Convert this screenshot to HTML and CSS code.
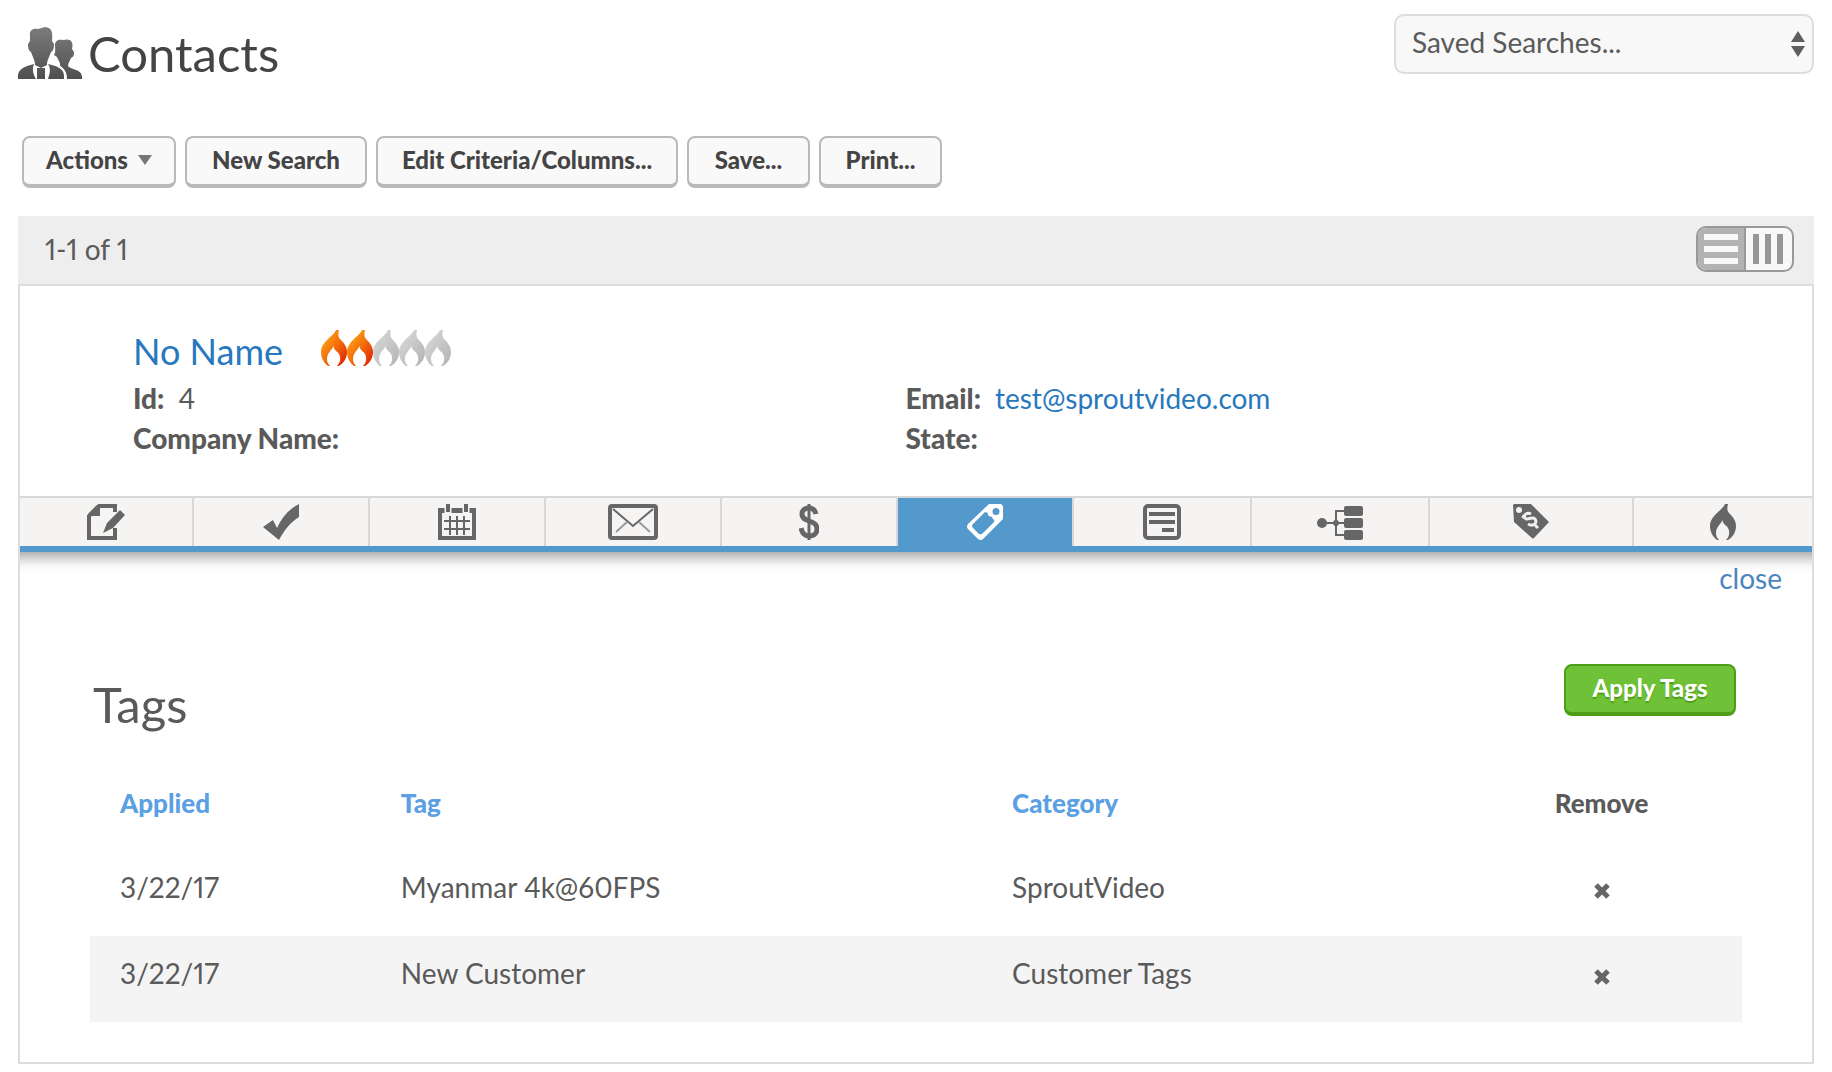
FILE: index.html
```html
<!DOCTYPE html>
<html lang="en">
<head>
<meta charset="utf-8">
<title>Contacts</title>
<link rel="stylesheet" href="styles.css">
</head>
<body>
<svg class="defs" aria-hidden="true">
  <defs>
    <linearGradient id="hot" x1="0" y1="0" x2="1" y2="1">
      <stop offset="0.2" stop-color="#fb9a14"/>
      <stop offset="0.5" stop-color="#f4700b"/>
      <stop offset="0.85" stop-color="#e33205"/>
    </linearGradient>
    <linearGradient id="cold" x1="0" y1="0" x2="1" y2="1">
      <stop offset="0.2" stop-color="#d3d3d3"/>
      <stop offset="0.85" stop-color="#b9b9b9"/>
    </linearGradient>
    <linearGradient id="people" gradientUnits="userSpaceOnUse" x1="0" y1="0" x2="0" y2="52">
      <stop offset="0" stop-color="#7c7c7c"/>
      <stop offset="1" stop-color="#4f4f4f"/>
    </linearGradient>
    <symbol id="flame" viewBox="0 0 26 36">
      <path d="M15 0H18C17 4 17 7 19 9C22 12 26 16 26 22C26 28 23 33 18 36H16C19 33 20 29 18.500 25C17 21 13 21 12.500 16C11 20 6 23 6 29C6 32 7 34 9 36H7C3 33 0 28 0 22C0 16 4 12 8 8C11 5 14 3 15 0Z"/>
    </symbol>
  </defs>
</svg>

<header class="page-head">
  <h1 class="title">
    <svg class="title-icon" viewBox="0 0 64 52" fill="url(#people)" aria-hidden="true">
      <path d="M12 9C11 3 15 1 20 2L27 0C34 1 35 5 34 14L36 17C36 22 35 24 33 25C31 31 29 33 29 38L23 41L17 38C17 33 15 31 13 25C11 24 10 22 10 17L12 14Z"/>
      <path d="M37 18C37 14 40 12 45 13C52 11 56 14 54 22L56 25C56 29 55 30 53 31C52 34 50 36 50 39C53 43 64 42 64 50V52H49C49 45 46 41 42 39C43 36 40 33 39 30L36 28C38 25 37 22 37 18Z"/>
      <path d="M0 52V49C0 41 9 39 16 37C14 42 15 47 18 52Z"/>
      <path d="M30 37C38 39 46 41 46 49V52H30C32 46 33 42 30 37Z"/>
      <path d="M19 41H27V52H19Z"/>
    </svg>
    Contacts
  </h1>
  <div class="saved">
    <select class="saved-select" aria-label="Saved searches">
      <option>Saved Searches...</option>
    </select>
    <svg class="saved-arrows" viewBox="0 0 14 26" aria-hidden="true"><path d="M7 0L14 11H0ZM7 26L14 15H0Z" fill="#5e5e5e"/></svg>
  </div>
</header>

<div class="actions">
  <button class="btn btn-menu" type="button">Actions<svg class="caret" viewBox="0 0 14 10" aria-hidden="true"><path d="M0 0H14L7 10Z" fill="#777"/></svg></button>
  <button class="btn btn-search" type="button">New Search</button>
  <button class="btn btn-edit" type="button">Edit Criteria/Columns...</button>
  <button class="btn btn-short" type="button">Save...</button>
  <button class="btn btn-short" type="button">Print...</button>
</div>

<main class="results">
  <div class="bar">
    <span>1-1 of 1</span>
    <div class="toggle">
      <button class="toggle-btn is-on" type="button" aria-label="List view"><svg viewBox="0 0 34 32" aria-hidden="true"><path d="M0 1H34V7H0ZM0 13H34V19H0ZM0 25H34V31H0Z" fill="#f8f8f8"/></svg></button>
      <button class="toggle-btn" type="button" aria-label="Column view"><svg viewBox="0 0 34 32" aria-hidden="true"><path d="M1 1H7V31H1ZM13 1H19V31H13ZM25 1H31V31H25Z" fill="#969696"/></svg></button>
    </div>
  </div>

  <div class="card">
    <section class="contact">
      <div class="name-row">
        <a class="name" href="#">No Name</a>
        <div class="rating" role="img" aria-label="Score 2 of 5">
          <svg fill="url(#hot)"><use href="#flame"/></svg>
          <svg fill="url(#hot)"><use href="#flame"/></svg>
          <svg fill="url(#cold)"><use href="#flame"/></svg>
          <svg fill="url(#cold)"><use href="#flame"/></svg>
          <svg fill="url(#cold)"><use href="#flame"/></svg>
        </div>
      </div>
      <dl class="fields">
        <div class="field"><dt>Id:</dt><dd>4</dd></div>
        <div class="field"><dt>Email:</dt><dd><a href="#">test@sproutvideo.com</a></dd></div>
        <div class="field"><dt>Company Name:</dt><dd></dd></div>
        <div class="field"><dt>State:</dt><dd></dd></div>
      </dl>
    </section>

    <nav class="tabs">
      <a class="tab" href="#" aria-label="Notes"><svg width="38" height="36" viewBox="0 0 38 36"><path d="M28 8V2H12L2 12V34H28V24" fill="none" stroke="#666" stroke-width="4"/><path d="M10 1H13V12H1V10Z" fill="#666"/><path d="M33 6L38 11L26 24L16 29L20 19Z" fill="#666"/></svg></a>
      <a class="tab" href="#" aria-label="Tasks"><svg width="36" height="36" viewBox="0 0 36 36"><path d="M0 23L10 16L14 24C19 13 26 5 36 0V13C28 18 22 25 16 36Z" fill="#666"/></svg></a>
      <a class="tab" href="#" aria-label="Appointments"><svg width="38" height="36" viewBox="0 0 38 36"><path d="M2 6H36V34H2Z" fill="none" stroke="#666" stroke-width="4"/><path d="M2 4H36V9H2Z" fill="#666"/><path d="M10 3V9M28 3V9" stroke="#f5f4f2" stroke-width="7"/><path d="M10 0V8M28 0V8" stroke="#666" stroke-width="4"/><path d="M12 12V31M19 12V31M26 12V31M6 17H32M6 25H32" stroke="#666" stroke-width="2"/></svg></a>
      <a class="tab" href="#" aria-label="Email"><svg width="50" height="36" viewBox="0 0 50 36"><rect x="2" y="2" width="46" height="32" rx="2" fill="none" stroke="#666" stroke-width="4"/><path d="M5 5L25 22L45 5" fill="none" stroke="#666" stroke-width="2"/><path d="M8 28L19 18M42 28L31 18" stroke="#999" stroke-width="2"/></svg></a>
      <a class="tab" href="#" aria-label="Orders"><svg width="20" height="36" viewBox="0 0 20 36" fill="none" stroke="#666"><path d="M10 0V36" stroke-width="3"/><path d="M17 10C16 6 14 4 10 4C6 4 3 6 3 10C3 19 18 15 18 25C18 30 14 32 10 32C5 32 3 29 2 24" stroke-width="5"/></svg></a>
      <a class="tab is-active" href="#" aria-label="Tags" aria-current="page"><svg width="36" height="36" viewBox="0 0 36 36"><path fill-rule="evenodd" fill="#fff" d="M22 0H34L36 2V15L16 35Q14 37 11 35L1 25Q-1 23 1 20ZM18 8L6 20Q4 22 6 24L12 30Q14 31 16 29L27 18Q28 16 26 15L25 13Q20 12 21 9ZM29 4A3 3 0 1 0 29 11A3 3 0 1 0 29 4Z"/></svg></a>
      <a class="tab" href="#" aria-label="Web forms"><svg width="38" height="36" viewBox="0 0 38 36"><rect x="2" y="2" width="34" height="32" rx="3" fill="none" stroke="#666" stroke-width="4"/><path d="M6 10H32M6 18H32M19 26H31" stroke="#666" stroke-width="4"/></svg></a>
      <a class="tab" href="#" aria-label="Campaigns"><svg width="46" height="36" viewBox="0 0 46 36"><path d="M5 19H30M30 7H19V31H30" fill="none" stroke="#666" stroke-width="2"/><g fill="#666"><circle cx="5" cy="19" r="5"/><circle cx="19" cy="19" r="3"/><rect x="27" y="2" width="19" height="10" rx="2"/><rect x="27" y="14" width="19" height="10" rx="2"/><rect x="27" y="26" width="19" height="10" rx="2"/></g></svg></a>
      <a class="tab" href="#" aria-label="Referrals"><svg width="36" height="36" viewBox="0 0 36 36"><path d="M0 1L1 0H18L36 18L21 34Q20 35 19 34L1 18Z" fill="#666"/><circle cx="6" cy="6" r="3" fill="#f5f4f2"/><path d="M18 10C14 8 10 11 12 14C14 17 19 12 22 15C25 19 20 23 15 20M9 12L12 14M22 21L25 24" fill="none" stroke="#eee" stroke-width="3"/></svg></a>
      <a class="tab" href="#" aria-label="Lead score"><svg width="26" height="36" fill="#666"><use href="#flame"/></svg></a>
    </nav>

    <section class="pane">
      <a class="close" href="#">close</a>
      <div class="pane-head">
        <h2 class="pane-title">Tags</h2>
        <button class="btn btn-go" type="button">Apply Tags</button>
      </div>
      <table class="tags">
        <colgroup><col class="c-date"><col class="c-tag"><col class="c-cat"><col></colgroup>
        <thead>
          <tr><th><a href="#">Applied</a></th><th><a href="#">Tag</a></th><th><a href="#">Category</a></th><th class="rm">Remove</th></tr>
        </thead>
        <tbody>
          <tr><td>3/22/17</td><td>Myanmar 4k@60FPS</td><td>SproutVideo</td><td class="rm"><button class="x" type="button" aria-label="Remove Myanmar 4k@60FPS"><svg viewBox="0 0 16 16"><path d="M2 2L14 14M14 2L2 14" stroke="#666" stroke-width="5"/></svg></button></td></tr>
          <tr><td>3/22/17</td><td>New Customer</td><td>Customer Tags</td><td class="rm"><button class="x" type="button" aria-label="Remove New Customer"><svg viewBox="0 0 16 16"><path d="M2 2L14 14M14 2L2 14" stroke="#666" stroke-width="5"/></svg></button></td></tr>
        </tbody>
      </table>
    </section>
  </div>
</main>
</body>
</html>
```
FILE: styles.css
```css
* { box-sizing: border-box; }

body {
  margin: 0;
  padding: 14px 18px 8px;
  background: #fff;
  color: #5a5a5a;
  font-family: Lato, "Open Sans", sans-serif;
  font-size: 28px;
  font-variant-numeric: proportional-nums;
  line-height: 40px;
}

a { color: #2878be; text-decoration: none; }
button, select { font: inherit; color: inherit; cursor: pointer; }
svg { display: block; }
.defs { position: absolute; width: 0; height: 0; }

/* Page heading */
.page-head {
  display: flex;
  justify-content: space-between;
  align-items: flex-start;
  height: 122px;
}
.title {
  display: flex;
  align-items: center;
  gap: 6px;
  margin: 0;
  padding-top: 12px;
  color: #444;
  font-size: 49px;
  font-weight: 400;
  line-height: 54px;
}
.title-icon { width: 64px; height: 52px; }

.saved { position: relative; width: 420px; }
.saved-select {
  appearance: none;
  width: 100%;
  height: 60px;
  padding: 0 40px 4px 16px;
  border: 2px solid #ddd;
  border-radius: 10px;
  background: #f8f8f8;
}
.saved-arrows {
  position: absolute;
  top: 17px;
  right: 9px;
  width: 14px;
  height: 26px;
  pointer-events: none;
}

/* Buttons */
.actions {
  display: flex;
  gap: 9px;
  margin-bottom: 28px;
  padding-left: 4px;
}
.btn {
  display: flex;
  align-items: center;
  justify-content: center;
  gap: 10px;
  height: 52px;
  padding: 0 0 2px;
  border: 2px solid #b9b9b9;
  border-bottom-width: 4px;
  border-radius: 8px;
  background: #f9f9f9;
  color: #444;
  font-size: 24px;
  font-weight: 900;
  white-space: nowrap;
}
.btn-menu { width: 154px; }
.btn-search { width: 182px; }
.btn-edit { width: 302px; }
.btn-short { width: 123px; }
.caret { width: 14px; height: 10px; }
.btn-go {
  width: 172px;
  border-color: #4f9e18;
  background: #6fc237;
  color: #fff;
  text-shadow: 0 2px 1px #4f9e18;
}

/* Result list */
.bar {
  display: flex;
  justify-content: space-between;
  align-items: center;
  height: 68px;
  padding: 0 20px 2px 27px;
  background: #eee;
}
.toggle {
  display: flex;
  width: 98px;
  height: 46px;
  border: 2px solid #999;
  border-radius: 10px;
  background: #f8f8f8;
  overflow: hidden;
}
.toggle-btn {
  display: grid;
  flex: 1;
  place-items: center;
  padding: 0;
  border: 0;
  background: none;
}
.toggle-btn.is-on { border-right: 2px solid #999; background: #b3b3b3; }
.toggle-btn svg { width: 34px; height: 32px; }

.card { border: 2px solid #ddd; }

.contact { padding: 38px 134px 38px 113px; }
.name-row { display: flex; gap: 38px; height: 54px; }
.name { font-size: 36px; line-height: 54px; }
.rating { display: flex; padding-top: 6px; }
.rating svg { width: 26px; height: 36px; }
.fields {
  display: grid;
  grid-template-columns: 1fr 1fr;
  margin: 0;
}
.field { display: flex; gap: 14px; }
.field dt { font-weight: 900; }
.field dd { margin: 0; }

/* Tabs */
.tabs {
  position: relative;
  display: grid;
  grid-template-columns: 174fr repeat(5, 176fr) 178fr 178fr 204fr 178fr;
  border-top: 2px solid #d8d8d8;
  border-bottom: 6px solid #5499cb;
}
.tabs::after {
  content: "";
  position: absolute;
  top: 100%;
  left: 0;
  right: 0;
  height: 20px;
  margin-top: 6px;
  background: linear-gradient(#b4b4b4, #dedede 40%, #f7f7f7 70%, #fff);
}
.tab {
  display: grid;
  place-items: center;
  height: 48px;
  border-right: 2px solid #d8d8d8;
  background: #f5f4f2;
}
.tab:last-child { border-right: 0; }
.tab.is-active { background: #5499cb; }

/* Tag pane */
.pane { padding: 6px 70px 40px; }
.close {
  display: block;
  position: relative;
  width: max-content;
  margin: 0 -40px 0 auto;
  color: #4a86bd;
}
.pane-head {
  display: flex;
  justify-content: space-between;
  align-items: flex-start;
  padding: 66px 6px 54px 3px;
}
.pane-title {
  margin: 0;
  padding-top: 12px;
  font-size: 49px;
  font-weight: 400;
  line-height: 56px;
}
.tags {
  width: 100%;
  border-collapse: collapse;
  table-layout: fixed;
}
.c-date { width: 17%; }
.c-tag { width: 37%; }
.c-cat { width: 29%; }
.tags th, .tags td {
  height: 86px;
  padding: 0 0 12px 30px;
  text-align: left;
}
.tags th {
  height: 64px;
  padding-bottom: 30px;
  font-size: 26px;
  font-weight: 900;
  line-height: 34px;
}
.tags th a { color: #5aa0e2; }
.tags tbody tr:nth-child(even) { background: #f4f4f4; }
.tags .rm { padding-left: 0; text-align: center; }
.x { padding: 0; border: 0; background: none; vertical-align: middle; }
.x svg { width: 16px; height: 16px; }
```
